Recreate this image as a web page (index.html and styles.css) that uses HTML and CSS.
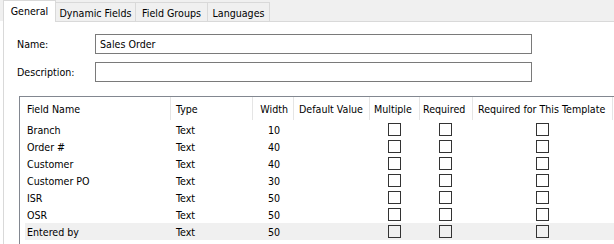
FILE: index.html
```html
<!DOCTYPE html>
<html>
<head>
<meta charset="utf-8">
<link rel="stylesheet" href="styles.css">
</head>
<body>
<div class="tabstrip">
  <div class="tab active">General</div>
  <div class="tab t2">Dynamic Fields</div>
  <div class="tab t3">Field Groups</div>
  <div class="tab t4">Languages</div>
</div>
<div class="panel">
  <div class="formrow">
    <label class="lbl">Name:</label>
    <div class="input">Sales Order</div>
  </div>
  <div class="formrow">
    <label class="lbl">Description:</label>
    <div class="input"></div>
  </div>
  <div class="list">
    <div class="grid head">
      <div class="h c1">Field Name</div>
      <div class="h c2">Type</div>
      <div class="h c3">Width</div>
      <div class="h c4">Default Value</div>
      <div class="h c5">Multiple</div>
      <div class="h c6">Required</div>
      <div class="h c7">Required for This Template</div>
    </div>
    <div class="grid row"><div class="c1">Branch</div><div class="c2">Text</div><div class="c3 num">10</div><div class="c4"></div><div class="c5 cb"><span class="box"></span></div><div class="c6 cb"><span class="box"></span></div><div class="c7 cb"><span class="box"></span></div></div>
    <div class="grid row"><div class="c1">Order #</div><div class="c2">Text</div><div class="c3 num">40</div><div class="c4"></div><div class="c5 cb"><span class="box"></span></div><div class="c6 cb"><span class="box"></span></div><div class="c7 cb"><span class="box"></span></div></div>
    <div class="grid row"><div class="c1">Customer</div><div class="c2">Text</div><div class="c3 num">40</div><div class="c4"></div><div class="c5 cb"><span class="box"></span></div><div class="c6 cb"><span class="box"></span></div><div class="c7 cb"><span class="box"></span></div></div>
    <div class="grid row"><div class="c1">Customer PO</div><div class="c2">Text</div><div class="c3 num">30</div><div class="c4"></div><div class="c5 cb"><span class="box"></span></div><div class="c6 cb"><span class="box"></span></div><div class="c7 cb"><span class="box"></span></div></div>
    <div class="grid row"><div class="c1">ISR</div><div class="c2">Text</div><div class="c3 num">50</div><div class="c4"></div><div class="c5 cb"><span class="box"></span></div><div class="c6 cb"><span class="box"></span></div><div class="c7 cb"><span class="box"></span></div></div>
    <div class="grid row"><div class="c1">OSR</div><div class="c2">Text</div><div class="c3 num">50</div><div class="c4"></div><div class="c5 cb"><span class="box"></span></div><div class="c6 cb"><span class="box"></span></div><div class="c7 cb"><span class="box"></span></div></div>
    <div class="grid row sel"><div class="c1">Entered by</div><div class="c2">Text</div><div class="c3 num">50</div><div class="c4"></div><div class="c5 cb"><span class="box"></span></div><div class="c6 cb"><span class="box"></span></div><div class="c7 cb"><span class="box"></span></div></div>
  </div>
</div>
</body>
</html>
```
FILE: styles.css
```css
html, body {
  margin: 0;
  padding: 0;
}
body {
  width: 614px;
  height: 244px;
  overflow: hidden;
  background: #ffffff;
  font-family: "DejaVu Sans Condensed", "DejaVu Sans", sans-serif;
  font-size: 10.6px;
  color: #000;
}
.tabstrip {
  display: flex;
  align-items: flex-end;
  height: 21px;
  padding-left: 3px;
  background: #f0f0f0;
}
.tab {
  box-sizing: border-box;
  height: 19px;
  display: flex;
  align-items: center;
  justify-content: center;
  border-top: 1px solid #d9d9d9;
  border-right: 1px solid #d9d9d9;
  background: #f0f0f0;
  padding-top: 1px;
}
.tab.active {
  height: 22px;
  width: 53px;
  margin-bottom: -1px;
  border-left: 1px solid #d9d9d9;
  background: #fff;
  position: relative;
  z-index: 1;
  padding-top: 0;
  padding-bottom: 1px;
}
.t2 { width: 80px; }
.t3 { width: 72px; }
.t4 { width: 62px; }
.panel {
  box-sizing: border-box;
  margin-left: 3px;
  border-top: 1px solid #d9d9d9;
  border-left: 1px solid #d9d9d9;
  height: 223px;
  padding-top: 12px;
  background: #fff;
  overflow: hidden;
}
.formrow {
  display: flex;
  align-items: center;
  padding-left: 13px;
  margin-bottom: 8px;
}
.lbl {
  width: 78px;
}
.input {
  box-sizing: border-box;
  width: 437px;
  height: 20px;
  border: 1px solid #7a7a7a;
  padding-left: 4px;
  display: flex;
  align-items: center;
}
.list {
  margin-left: 15px;
  margin-top: 14px;
  border-top: 1px solid #828790;
  border-left: 1px solid #828790;
  height: 150px;
}
.grid {
  display: grid;
  grid-template-columns: 151px 82px 41px 76px 50px 53px 140px 20px;
}
.head {
  height: 24px;
}
.h {
  box-sizing: border-box;
  border-right: 1px solid #e5e5e5;
  height: 23px;
  display: flex;
  align-items: center;
  white-space: nowrap;
}
.row {
  height: 17px;
}
.row > div {
  display: flex;
  align-items: center;
  white-space: nowrap;
}
.c1 { padding-left: 7px; }
.c2 { padding-left: 5px; }
.h.c3 { justify-content: flex-end; padding-right: 5px; }
.num { justify-content: center; padding-left: 1px; }
.c4 { padding-left: 5px; }
.h.c5 { padding-left: 4px; }
.h.c6 { padding-left: 3px; }
.h.c7 { padding-left: 5px; }
.cb { justify-content: center; padding-right: 2px; }
.box {
  box-sizing: border-box;
  width: 13px;
  height: 13px;
  border: 1px solid #333;
}
.sel {
  background: linear-gradient(to right, transparent 5px, #f0f0f0 5px);
}
```
